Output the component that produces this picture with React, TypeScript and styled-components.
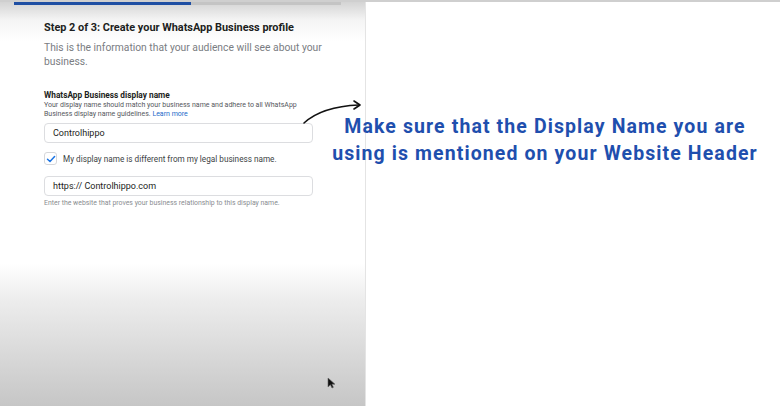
import * as React from 'react';
import styled, { createGlobalStyle } from 'styled-components';

const GlobalStyle = createGlobalStyle`
  html, body {
    margin: 0;
    padding: 0;
    background: #ffffff;
    font-family: Roboto, "Liberation Sans", Arial, sans-serif;
  }
`;

const App: React.FC = () => {
  return (
    <Page>
      <GlobalStyle />
      <Panel>
        <Progress>
          <ProgressFill $percent={54} />
        </Progress>
        <Form>
          <Title>Step 2 of 3: Create your WhatsApp Business profile</Title>
          <Subtitle>
            This is the information that your audience will see about your business.
          </Subtitle>
          <Field>
            <Label>WhatsApp Business display name</Label>
            <Help>
              Your display name should match your business name and adhere to all WhatsApp
              Business display name guidelines. <LinkText>Learn more</LinkText>
            </Help>
            <Input>Controlhippo</Input>
          </Field>
          <CheckRow>
            <CheckBox>
              <svg width="10" height="10" viewBox="0 0 10 10">
                <path d="M1.5 5.2 L4 7.5 L8.6 2.6" fill="none" stroke="#1b74e4" strokeWidth="1.5" strokeLinecap="round" strokeLinejoin="round" />
              </svg>
            </CheckBox>
            <CheckLabel>My display name is different from my legal business name.</CheckLabel>
          </CheckRow>
          <Field>
            <Input>https:// Controlhippo.com</Input>
            <Hint>Enter the website that proves your business relationship to this display name.</Hint>
          </Field>
        </Form>
        <Cursor>
          <svg width="9" height="12" viewBox="0 0 9 12">
            <path d="M1 1 L1 10 L3.4 7.8 L5 11 L6.4 10.3 L4.9 7.2 L8 7.2 Z" fill="#111" stroke="#666" strokeWidth="0.6" />
          </svg>
        </Cursor>
      </Panel>
      <Callout>
        <Arrow>
          <svg width="64" height="28" viewBox="0 0 64 28">
            <path d="M2 25 C 14 14, 32 8, 57 7" fill="none" stroke="#111" strokeWidth="1.6" strokeLinecap="round" />
            <path d="M52 3 L58 7 L52 11" fill="none" stroke="#111" strokeWidth="1.6" strokeLinecap="round" strokeLinejoin="round" />
          </svg>
        </Arrow>
        <Message>
          Make sure that the Display Name you are
          <br />
          using is mentioned on your Website Header
        </Message>
      </Callout>
    </Page>
  );
};

export default App;

const Page = styled.div`
  display: grid;
  grid-template-columns: 366px 1fr;
  width: 780px;
  height: 406px;
  overflow: hidden;
  border-top: 2px solid #cfcfcf;
  box-sizing: border-box;
`;

const Panel = styled.div`
  position: relative;
  background: linear-gradient(
    to bottom,
    #d4d4d4 0px,
    #f4f4f4 18px,
    #ffffff 40px,
    #ffffff 262px,
    #ececec 300px,
    #d6d6d6 360px,
    #c6c6c6 404px
  );
  border-right: 1px solid #e4e4e4;
`;

const Progress = styled.div`
  margin: 0 24px 0 14px;
  height: 3px;
  background: #c4c4c4;
`;

const ProgressFill = styled.div<{ $percent: number }>`
  height: 100%;
  width: ${(p) => p.$percent}%;
  background: #1f4fa3;
`;

const Form = styled.div`
  padding: 15px 40px 0 44px;
  display: flex;
  flex-direction: column;
`;

const Title = styled.div`
  font-size: 10.9px;
  font-weight: 700;
  color: #1c1e21;
  line-height: 16px;
`;

const Subtitle = styled.div`
  margin-top: 5px;
  font-size: 10.3px;
  color: #7a7d82;
  line-height: 13.5px;
  width: 282px;
`;

const Field = styled.div`
  display: flex;
  flex-direction: column;
`;

const Label = styled.div`
  margin-top: 22px;
  margin-bottom: 1px;
  font-size: 8.3px;
  font-weight: 700;
  color: #1c1e21;
  line-height: 10px;
`;

const Help = styled.div`
  font-size: 7px;
  color: #55585d;
  line-height: 8.5px;
  width: 280px;
`;

const LinkText = styled.span`
  color: #1b6ac9;
`;

const Input = styled.div`
  margin-top: 5px;
  height: 20px;
  width: 269px;
  box-sizing: border-box;
  border: 1px solid #dcdde0;
  border-radius: 4px;
  background: #ffffff;
  padding: 0 8px;
  display: flex;
  align-items: center;
  font-size: 9px;
  color: #1c1e21;
`;

const CheckRow = styled.div`
  margin-top: 9px;
  margin-bottom: 6px;
  display: flex;
  align-items: center;
  gap: 6px;
`;

const CheckBox = styled.div`
  width: 13px;
  height: 13px;
  box-sizing: border-box;
  border: 1px solid #d6d7da;
  border-radius: 3px;
  background: #fff;
  display: flex;
  align-items: center;
  justify-content: center;
`;

const CheckLabel = styled.div`
  font-size: 8.2px;
  color: #3c3f44;
`;

const Hint = styled.div`
  margin-top: 3px;
  font-size: 6.9px;
  color: #8a8d91;
`;

const Cursor = styled.div`
  position: absolute;
  left: 327px;
  top: 372px;
`;

const Callout = styled.div`
  position: relative;
  padding-top: 111px;
  display: flex;
  justify-content: center;
`;

const Arrow = styled.div`
  position: absolute;
  left: -64px;
  top: 96px;
`;

const Message = styled.div`
  margin-left: -56px;
  text-align: center;
  font-family: Roboto, "Liberation Sans", Arial, sans-serif;
  font-weight: 700;
  font-size: 19.5px;
  letter-spacing: 1.1px;
  line-height: 27px;
  color: #1f4fae;
`;
